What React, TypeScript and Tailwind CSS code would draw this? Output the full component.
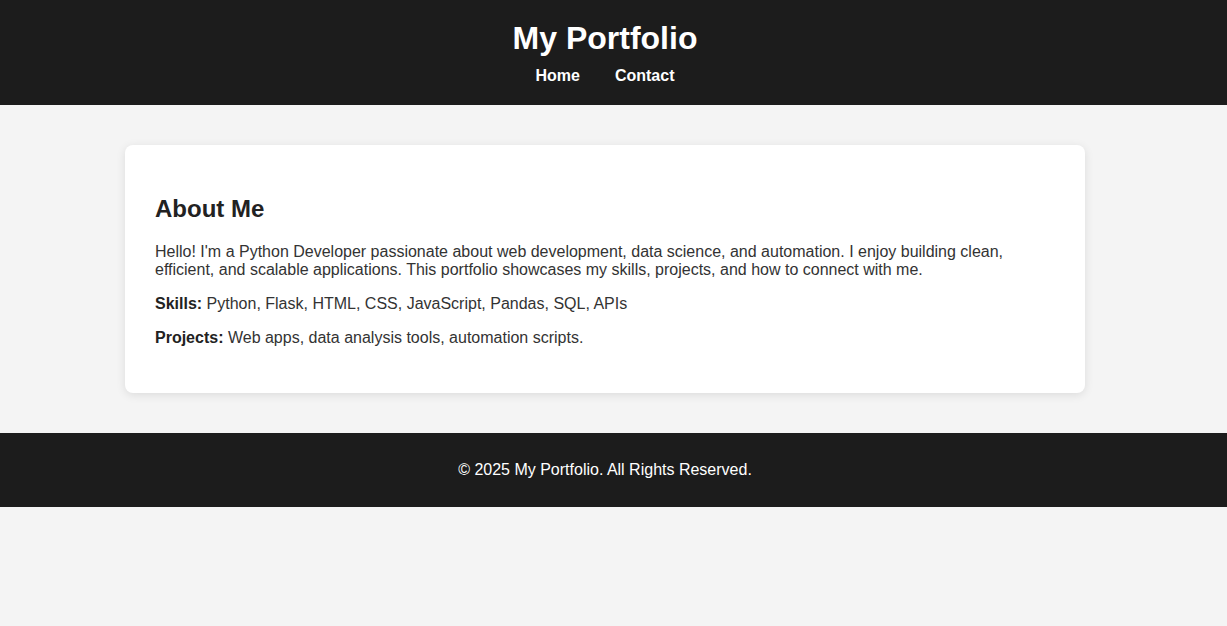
export default function App() {
  return (
    <div className="min-h-[626px] bg-[#f4f4f4] font-['Liberation_Sans',Arial,sans-serif] text-[16px] leading-normal text-[#333]">
      <header className="bg-[#1c1c1c] py-[20px] pr-[17px] text-center text-white">
        <h1 className="text-[32px] font-bold leading-[37px]">My Portfolio</h1>
        <nav className="mt-[10px] flex justify-center gap-[35px] font-bold leading-[18px]">
          <a href="#" className="text-white">Home</a>
          <a href="#" className="text-white">Contact</a>
        </nav>
      </header>

      <main className="pr-[17px] py-[40px]">
        <section className="mx-auto w-[960px] rounded-[8px] bg-white p-[30px] shadow-[0_2px_10px_rgba(0,0,0,0.1)]">
          <h2 className="mt-[20px] text-[24px] font-bold leading-[28px] text-[#222]">About Me</h2>
          <p className="mt-[20px] leading-[18px]">
            Hello! I'm a Python Developer passionate about web development, data science, and automation. I enjoy building clean, efficient, and scalable applications. This portfolio showcases my skills, projects, and how to connect with me.
          </p>
          <p className="mt-[16px] leading-[18px]">
            <strong className="text-[#222]">Skills:</strong> Python, Flask, HTML, CSS, JavaScript, Pandas, SQL, APIs
          </p>
          <p className="mt-[16px] mb-[16px] leading-[18px]">
            <strong className="text-[#222]">Projects:</strong> Web apps, data analysis tools, automation scripts.
          </p>
        </section>
      </main>

      <footer className="bg-[#1c1c1c] py-[28px] pr-[17px] text-center text-white">
        <p className="leading-[18px]">© 2025 My Portfolio. All Rights Reserved.</p>
      </footer>
    </div>
  );
}
